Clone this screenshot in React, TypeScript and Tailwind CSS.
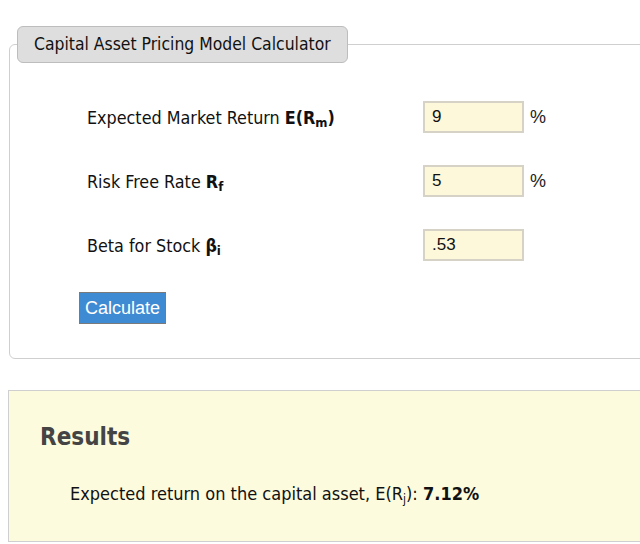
const tahoma = "font-['DejaVu_Sans_Condensed','Liberation_Sans',sans-serif]"
const arial = "font-['Liberation_Sans',Arial,sans-serif]"

type T_Row = {
    label: React.ReactNode
    value: string
    unit?: string
}

function Row(props: T_Row) {
    return (
        <div className="flex items-center h-[32px]">
            <div className="w-[336px] text-[17.8px] text-[#111] pt-[2px]">{props.label}</div>
            <input
                defaultValue={props.value}
                className={`${arial} w-[101px] h-[32px] px-[7px] text-[17px] text-[#111] bg-[#fdf8d9] border-2 border-[#d6d3c6] outline-none`}
            />
            {props.unit && <span className={`${arial} ml-[6px] text-[18px] text-[#222]`}>{props.unit}</span>}
        </div>
    )
}

export default function App() {
    return (
        <div className={`${tahoma} w-[640px] h-[544px] overflow-hidden bg-white`}>
            <fieldset className="ml-[9px] mt-[26px] w-[700px] border border-[#cfcfcf] rounded-[6px] pl-[77px] pr-0 pt-[38px] pb-[34px]">
                <legend className="-ml-[70px] px-[16px] h-[37px] flex items-center bg-[#dedede] border border-[#bdbdbd] rounded-[6px] text-[17.4px] text-[#111]">
                    Capital Asset Pricing Model Calculator
                </legend>
                <div className="flex flex-col gap-[32px]">
                    <Row
                        label={
                            <>
                                Expected Market Return{" "}
                                <b>
                                    E(R<sub className="text-[13px]">m</sub>)
                                </b>
                            </>
                        }
                        value="9"
                        unit="%"
                    />
                    <Row
                        label={
                            <>
                                Risk Free Rate{" "}
                                <b>
                                    R<sub className="text-[13px]">f</sub>
                                </b>
                            </>
                        }
                        value="5"
                        unit="%"
                    />
                    <Row
                        label={
                            <>
                                Beta for Stock{" "}
                                <b>
                                    β<sub className="text-[13px]">i</sub>
                                </b>
                            </>
                        }
                        value=".53"
                    />
                </div>
                <button
                    className={`${arial} mt-[31px] -ml-[8px] w-[87px] h-[32px] bg-[#3f8bd3] border border-[#7a7a7a] text-white text-[18px]`}>
                    Calculate
                </button>
            </fieldset>
            <div className="ml-[8px] mt-[31px] w-[700px] h-[152px] bg-[#fcfbde] border border-[#cfcfcf] pl-[31px] pt-[31px]">
                <h2 className="text-[24px] font-bold text-[#444] leading-[30px]">Results</h2>
                <p className="mt-[28px] pl-[30px] text-[18px] text-[#111]">
                    Expected return on the capital asset, E(R<sub className="text-[12px]">j</sub>):{" "}
                    <b>7.12%</b>
                </p>
            </div>
        </div>
    )
}
